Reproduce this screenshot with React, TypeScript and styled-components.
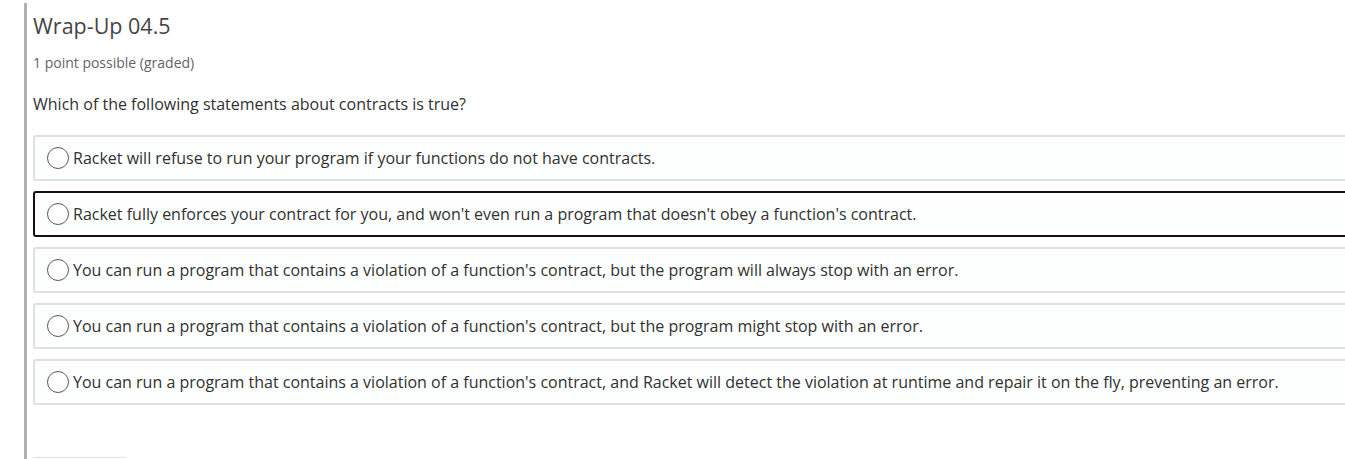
import styled, { createGlobalStyle } from "styled-components";

const GlobalStyle = createGlobalStyle`
  html, body {
    margin: 0;
    padding: 0;
    background: #ffffff;
    overflow: hidden;
  }
  body {
    font-family: "Open Sans", "Liberation Sans", sans-serif;
    color: #313131;
  }
`;

const Page = styled.div`
  width: 1345px;
  height: 459px;
  padding: 3px 0 0 24px;
  box-sizing: border-box;
  overflow: hidden;
`;

const Problem = styled.section`
  border-left: 3px solid #b1b1b1;
  padding-left: 6px;
  height: 100%;
  box-sizing: border-box;
`;

const Title = styled.h3`
  margin: 0;
  padding-top: 9px;
  font-size: 21.5px;
  font-weight: 400;
  line-height: 28px;
  color: #454545;
`;

const Meta = styled.div`
  margin-top: 13px;
  font-size: 14px;
  line-height: 19px;
  color: #646464;
`;

const Question = styled.p`
  margin: 20px 0 0;
  font-size: 16px;
  line-height: 24px;
  color: #313131;
`;

const Choices = styled.div`
  display: flex;
  flex-direction: column;
  gap: 10px;
  margin-top: 19px;
  margin-right: -40px;
`;

const Choice = styled.label<{ $focused?: boolean }>`
  display: flex;
  align-items: center;
  height: 46px;
  box-sizing: border-box;
  padding-left: 12px;
  border: 2px solid ${(p) => (p.$focused ? "#1d0c14" : "#e0e0e0")};
  border-radius: 3px;
  background: #fdfefe;
  font-size: 16px;
  color: #313131;
  cursor: pointer;
`;

const Radio = styled.span`
  width: 20px;
  height: 20px;
  border: 1px solid #5b5b5b;
  border-radius: 50%;
  margin-right: 4px;
  flex-shrink: 0;
  background: #fff;
`;

const Submit = styled.div`
  margin-top: 52px;
  width: 93px;
  border-top: 1px solid #e4e4e4;
  height: 10px;
`;

const choices = [
  "Racket will refuse to run your program if your functions do not have contracts.",
  "Racket fully enforces your contract for you, and won't even run a program that doesn't obey a function's contract.",
  "You can run a program that contains a violation of a function's contract, but the program will always stop with an error.",
  "You can run a program that contains a violation of a function's contract, but the program might stop with an error.",
  "You can run a program that contains a violation of a function's contract, and Racket will detect the violation at runtime and repair it on the fly, preventing an error.",
];

export default function App() {
  return (
    <>
      <GlobalStyle />
      <Page>
        <Problem>
          <Title>Wrap-Up 04.5</Title>
          <Meta>1 point possible (graded)</Meta>
          <Question>Which of the following statements about contracts is true?</Question>
          <Choices>
            {choices.map((c, i) => (
              <Choice key={i} $focused={i === 1}>
                <Radio />
                {c}
              </Choice>
            ))}
          </Choices>
          <Submit />
        </Problem>
      </Page>
    </>
  );
}
